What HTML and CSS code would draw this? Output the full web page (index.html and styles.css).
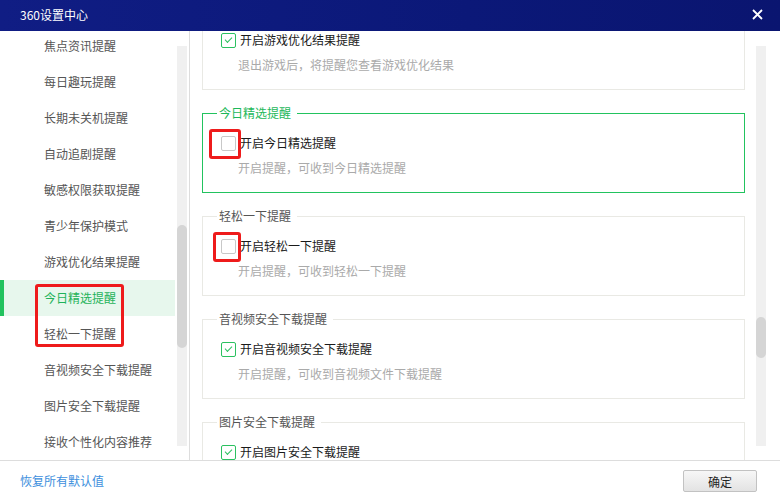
FILE: index.html
```html
<!DOCTYPE html>
<html lang="zh-CN">
<head>
    <meta charset="UTF-8">
    <title>360设置中心</title>
    <link rel="stylesheet" href="styles.css">
</head>
<body>
    <div class="window">
        <!-- title bar -->
        <div class="titlebar">
            <span class="title">360设置中心</span>
            <svg class="close" width="11" height="11" viewBox="0 0 11 11">
                <path d="M1 1L10 10M10 1L1 10" stroke="#fff" stroke-width="1.8" fill="none"/>
            </svg>
        </div>

        <div class="main">
            <!-- left menu -->
            <div class="sidebar">
                <ul class="nav">
                    <li>焦点资讯提醒</li>
                    <li>每日趣玩提醒</li>
                    <li>长期未关机提醒</li>
                    <li>自动追剧提醒</li>
                    <li>敏感权限获取提醒</li>
                    <li>青少年保护模式</li>
                    <li>游戏优化结果提醒</li>
                    <li class="active">今日精选提醒</li>
                    <li>轻松一下提醒</li>
                    <li>音视频安全下载提醒</li>
                    <li>图片安全下载提醒</li>
                    <li>接收个性化内容推荐</li>
                    <span class="mark mark-nav"></span>
                </ul>
                <div class="scrollbar nav-scroll"><div class="thumb"></div></div>
            </div>

            <!-- settings panel -->
            <div class="panel">
                <div class="groups">
                    <fieldset class="group">
                        <legend>游戏优化结果提醒</legend>
                        <div class="option">
                            <span class="check checked"></span>
                            <span class="label">开启游戏优化结果提醒</span>
                        </div>
                        <div class="desc">退出游戏后，将提醒您查看游戏优化结果</div>
                    </fieldset>

                    <fieldset class="group selected">
                        <legend>今日精选提醒</legend>
                        <div class="option">
                            <span class="check"><span class="mark mark-a"></span></span>
                            <span class="label">开启今日精选提醒</span>
                        </div>
                        <div class="desc">开启提醒，可收到今日精选提醒</div>
                    </fieldset>

                    <fieldset class="group">
                        <legend>轻松一下提醒</legend>
                        <div class="option">
                            <span class="check"><span class="mark mark-b"></span></span>
                            <span class="label">开启轻松一下提醒</span>
                        </div>
                        <div class="desc">开启提醒，可收到轻松一下提醒</div>
                    </fieldset>

                    <fieldset class="group">
                        <legend>音视频安全下载提醒</legend>
                        <div class="option">
                            <span class="check checked"></span>
                            <span class="label">开启音视频安全下载提醒</span>
                        </div>
                        <div class="desc">开启提醒，可收到音视频文件下载提醒</div>
                    </fieldset>

                    <fieldset class="group">
                        <legend>图片安全下载提醒</legend>
                        <div class="option">
                            <span class="check checked"></span>
                            <span class="label">开启图片安全下载提醒</span>
                        </div>
                    </fieldset>
                </div>
                <div class="scrollbar panel-scroll"><div class="thumb"></div></div>
            </div>
        </div>

        <!-- bottom bar -->
        <div class="footer">
            <a class="reset" href="#">恢复所有默认值</a>
            <button class="ok">确定</button>
        </div>
    </div>
</body>
</html>
```

FILE: styles.css
```css
body {
    margin: 0;
    font-family: "Noto Sans CJK SC", "Microsoft YaHei", sans-serif;
    font-size: 12px;
    background-color: #ffffff;
}
.window {
    width: 780px;
    height: 500px;
    display: flex;
    flex-direction: column;
    overflow: hidden;
}

/* title bar */
.titlebar {
    height: 31px;
    flex: none;
    display: flex;
    align-items: center;
    justify-content: space-between;
    padding: 0 17px 2px 20px;
    box-sizing: border-box;
    background: linear-gradient(90deg, #101d84 0%, #0b1878 60%, #0a1570 100%);
    color: #fff;
}
.title {
    font-size: 12px;
    line-height: 16px;
}

.main {
    height: 429px;
    flex: none;
    display: flex;
}

/* left menu */
.sidebar {
    width: 190px;
    flex: none;
    display: flex;
    border-right: 1px solid #dddddd;
    box-sizing: border-box;
    overflow: hidden;
}
.nav {
    position: relative;
    list-style: none;
    margin: -3px 0 0 0;
    padding: 0;
    width: 176px;
    flex: none;
}
.nav li {
    height: 36px;
    line-height: 36px;
    padding-left: 44px;
    color: #555;
    white-space: nowrap;
}
.nav li.active {
    background-color: #e7f7ed;
    color: #1fb35a;
    box-shadow: inset 4px 0 0 #22c25e;
    margin-right: 1px;
}

/* scrollbars */
.scrollbar {
    width: 10px;
    flex: none;
    margin: 15px 0 14px 0;
    background-color: #f0f0f0;
}
.scrollbar .thumb {
    background-color: #d5d5d5;
    border-radius: 5px;
}
.nav-scroll {
    margin-left: 1px;
}
.nav-scroll .thumb {
    margin-top: 179px;
    height: 123px;
}
.panel-scroll {
    margin-left: 11px;
}
.panel-scroll .thumb {
    margin-top: 271px;
    height: 41px;
}

/* settings panel */
.panel {
    flex: 1;
    display: flex;
    overflow: hidden;
}
.groups {
    width: 543px;
    flex: none;
    margin: -29px 0 0 12px;
}
.group {
    margin: 0 0 15px 0;
    padding: 14px 0 16px 0;
    border: 1px solid #e9e9e4;
    min-width: 0;
}
.group legend {
    margin-left: 14px;
    padding: 0 6px 0 2px;
    line-height: 16px;
    color: #555;
}
.group.selected {
    border-color: #22c35e;
}
.group.selected legend {
    color: #1db85a;
}
.option {
    display: flex;
    align-items: center;
    height: 16px;
    margin-left: 18px;
}
.check {
    position: relative;
    width: 15px;
    height: 15px;
    box-sizing: border-box;
    border: 1px solid #c8c8c8;
    border-radius: 2px;
    background: #fff;
    margin-right: 4px;
    flex: none;
}
.check.checked {
    border-color: #2bc160;
}
.check.checked::after {
    content: "";
    position: absolute;
    left: 3px;
    top: 2px;
    width: 6px;
    height: 3px;
    border-left: 1.3px solid #2bc160;
    border-bottom: 1.3px solid #2bc160;
    transform: translate(0, 1px) rotate(-45deg);
    transform-origin: center;
}
.label {
    color: #1a1a1a;
    line-height: 16px;
}
.desc {
    margin: 9px 0 0 35px;
    line-height: 16px;
    color: #aaaaaa;
}

/* red annotation boxes */
.mark {
    position: absolute;
    border: 3px solid #ee1b1b;
    border-radius: 3px;
    box-sizing: border-box;
}
.mark-nav {
    left: 35px;
    top: 256px;
    width: 89px;
    height: 63px;
}
.mark-a {
    left: -13px;
    top: -8px;
    width: 32px;
    height: 30px;
}
.mark-b {
    left: -9px;
    top: -8px;
    width: 28px;
    height: 30px;
}

/* bottom bar */
.footer {
    flex: 1;
    display: flex;
    align-items: center;
    justify-content: space-between;
    border-top: 1px solid #dddddd;
    padding: 1px 23px 0 20px;
}
.reset {
    color: #3d8fdd;
    text-decoration: none;
    line-height: 16px;
}
.ok {
    width: 74px;
    height: 22px;
    padding: 0;
    font-family: inherit;
    font-size: 12px;
    color: #222;
    border: 1px solid #c2c2c2;
    border-radius: 2px;
    background: linear-gradient(#f7f7f7, #e3e3e3);
}
```
